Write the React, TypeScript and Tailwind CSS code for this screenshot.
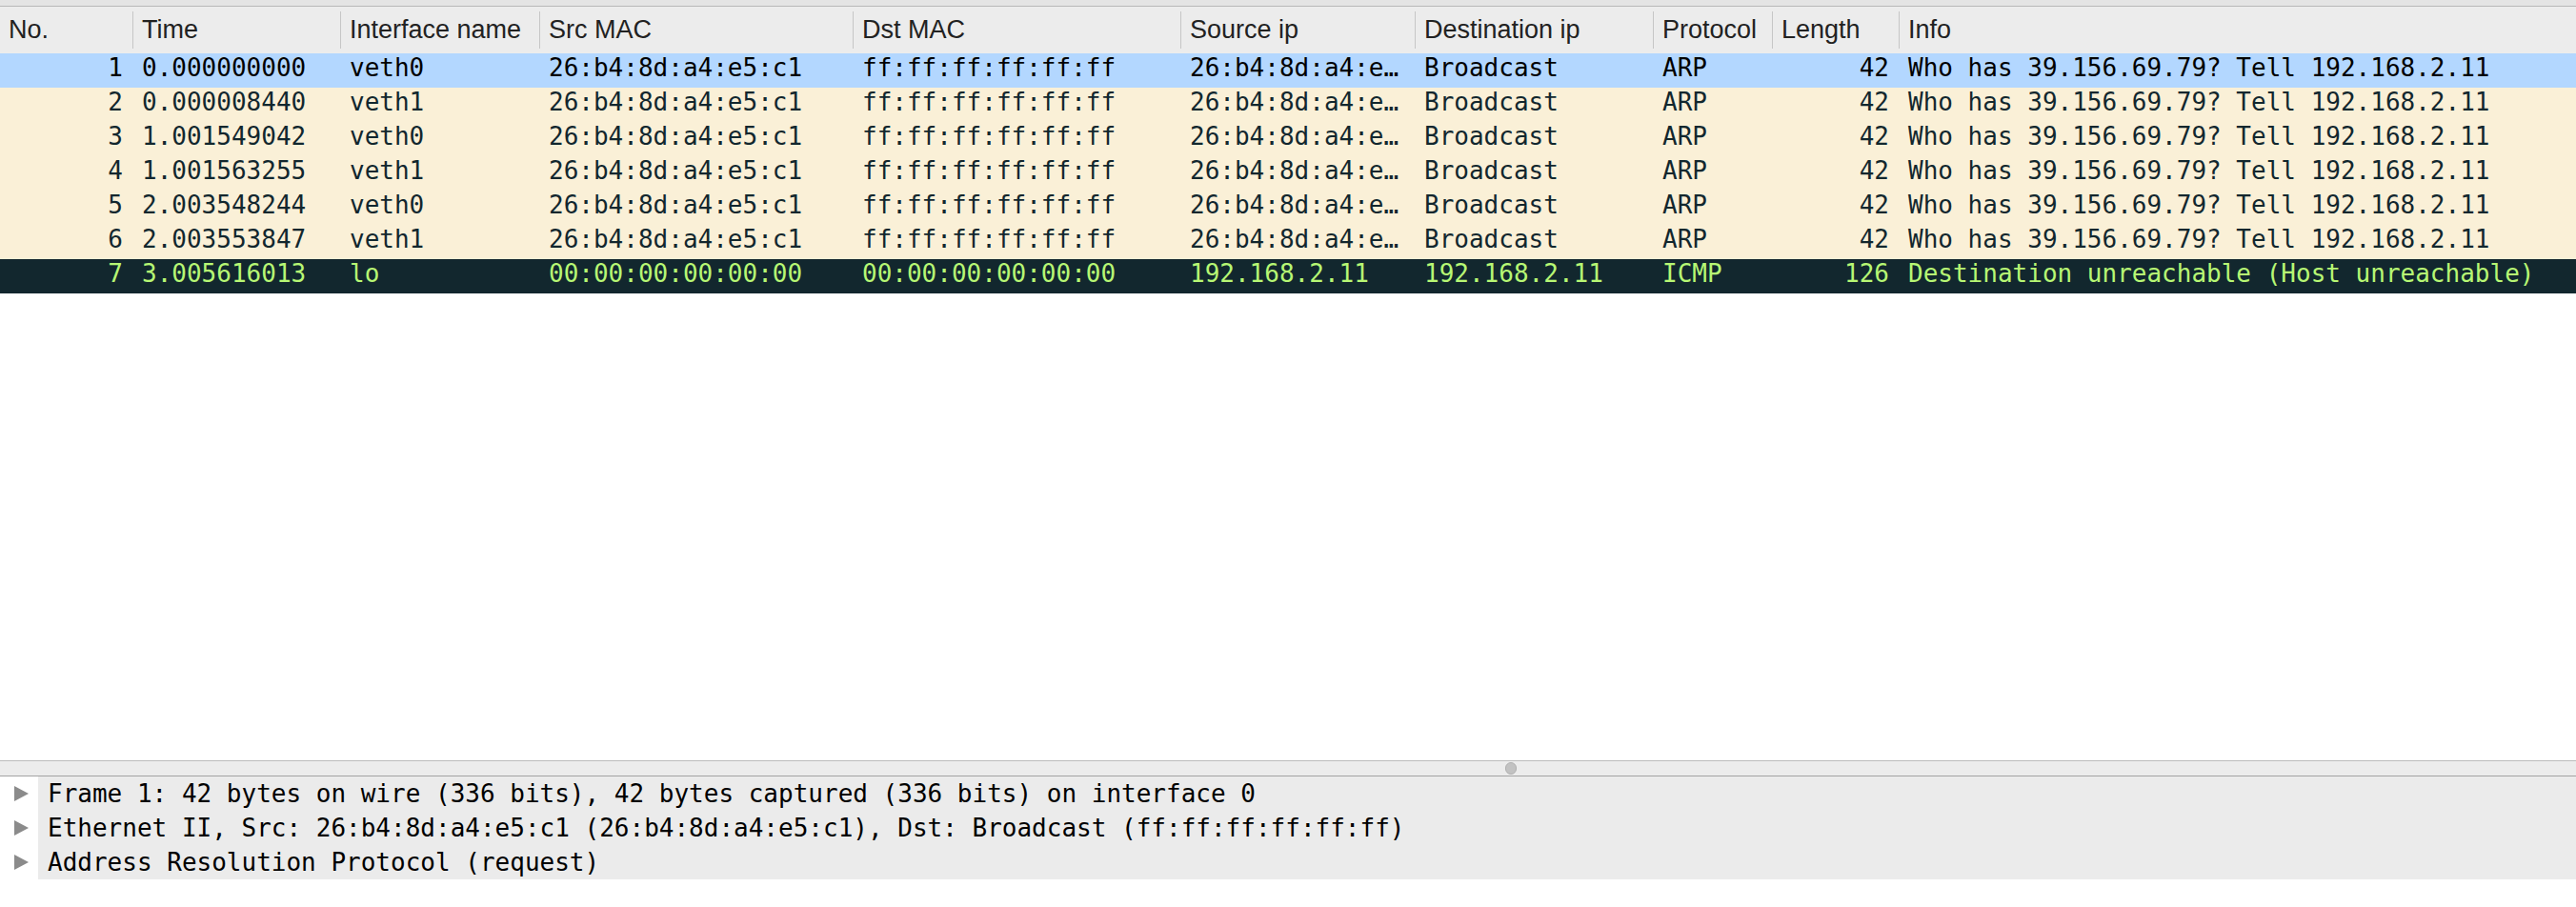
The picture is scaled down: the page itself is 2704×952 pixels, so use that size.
import React from "react";

interface Packet {
  no: number;
  time: string;
  iface: string;
  srcMac: string;
  dstMac: string;
  srcIp: string;
  dstIp: string;
  proto: string;
  length: number;
  info: string;
}

const arpInfo = "Who has 39.156.69.79? Tell 192.168.2.11";
const mac = "26:b4:8d:a4:e5:c1";
const macShort = "26:b4:8d:a4:e…";
const bcast = "ff:ff:ff:ff:ff:ff";

const packets: Packet[] = [
  { no: 1, time: "0.000000000", iface: "veth0", srcMac: mac, dstMac: bcast, srcIp: macShort, dstIp: "Broadcast", proto: "ARP", length: 42, info: arpInfo },
  { no: 2, time: "0.000008440", iface: "veth1", srcMac: mac, dstMac: bcast, srcIp: macShort, dstIp: "Broadcast", proto: "ARP", length: 42, info: arpInfo },
  { no: 3, time: "1.001549042", iface: "veth0", srcMac: mac, dstMac: bcast, srcIp: macShort, dstIp: "Broadcast", proto: "ARP", length: 42, info: arpInfo },
  { no: 4, time: "1.001563255", iface: "veth1", srcMac: mac, dstMac: bcast, srcIp: macShort, dstIp: "Broadcast", proto: "ARP", length: 42, info: arpInfo },
  { no: 5, time: "2.003548244", iface: "veth0", srcMac: mac, dstMac: bcast, srcIp: macShort, dstIp: "Broadcast", proto: "ARP", length: 42, info: arpInfo },
  { no: 6, time: "2.003553847", iface: "veth1", srcMac: mac, dstMac: bcast, srcIp: macShort, dstIp: "Broadcast", proto: "ARP", length: 42, info: arpInfo },
  {
    no: 7,
    time: "3.005616013",
    iface: "lo",
    srcMac: "00:00:00:00:00:00",
    dstMac: "00:00:00:00:00:00",
    srcIp: "192.168.2.11",
    dstIp: "192.168.2.11",
    proto: "ICMP",
    length: 126,
    info: "Destination unreachable (Host unreachable)",
  },
];

const details = [
  "Frame 1: 42 bytes on wire (336 bits), 42 bytes captured (336 bits) on interface 0",
  "Ethernet II, Src: 26:b4:8d:a4:e5:c1 (26:b4:8d:a4:e5:c1), Dst: Broadcast (ff:ff:ff:ff:ff:ff)",
  "Address Resolution Protocol (request)",
];

const mono = { fontFamily: '"DejaVu Sans Mono", "Liberation Mono", monospace' };

const Cell = ({ w, right, children }: { w: string; right?: boolean; children: React.ReactNode }) => (
  <div className={`${w} shrink-0 px-[10px] overflow-hidden whitespace-nowrap ${right ? "text-right" : ""}`}>
    {children}
  </div>
);

const HeaderCell = ({ w, first, label }: { w: string; first?: boolean; label: string }) => (
  <div className={`${w} shrink-0 flex items-stretch`}>
    {!first && <div className="w-px my-[5px] bg-[#c6c6c6]" />}
    <div className="flex items-center pl-[9px] pb-[1px]">{label}</div>
  </div>
);

const Triangle = () => (
  <svg width="15" height="16" viewBox="0 0 15 16">
    <path d="M0 0 L15 8 L0 16 Z" fill="#8b8b8b" />
  </svg>
);

export default function App() {
  return (
    <div className="w-[2704px] h-[952px] flex flex-col bg-white overflow-hidden">
      <div className="h-[7px] shrink-0 bg-[#e4e4e4] border-b border-[#b8b8b8]" />

      {/* column header */}
      <div
        className="h-[49px] shrink-0 flex bg-[#ececec] text-[27px] text-[#222222]"
        style={{ fontFamily: '"Liberation Sans", Arial, sans-serif' }}
      >
        <HeaderCell w="w-[139px]" first label="No." />
        <HeaderCell w="w-[218px]" label="Time" />
        <HeaderCell w="w-[209px]" label="Interface name" />
        <HeaderCell w="w-[329px]" label="Src MAC" />
        <HeaderCell w="w-[344px]" label="Dst MAC" />
        <HeaderCell w="w-[246px]" label="Source ip" />
        <HeaderCell w="w-[250px]" label="Destination ip" />
        <HeaderCell w="w-[125px]" label="Protocol" />
        <HeaderCell w="w-[133px]" label="Length" />
        <HeaderCell w="flex-1" label="Info" />
      </div>

      {/* packet list */}
      <div className="shrink-0 text-[26px] leading-[30px]" style={mono}>
        {packets.map((p) => {
          const selected = p.no === 1;
          const icmp = p.proto === "ICMP";
          const rowColor = selected
            ? "bg-[#b3d7ff] text-[#000000]"
            : icmp
            ? "bg-[#12272e] text-[#b7f774]"
            : "bg-[#faf0d7] text-[#12272e]";
          return (
            <div key={p.no} className={`h-[36px] flex items-start ${rowColor}`}>
              <Cell w="w-[139px]" right>{p.no}</Cell>
              <Cell w="w-[218px]">{p.time}</Cell>
              <Cell w="w-[209px]">{p.iface}</Cell>
              <Cell w="w-[329px]">{p.srcMac}</Cell>
              <Cell w="w-[344px]">{p.dstMac}</Cell>
              <Cell w="w-[246px]">{p.srcIp}</Cell>
              <Cell w="w-[250px]">{p.dstIp}</Cell>
              <Cell w="w-[125px]">{p.proto}</Cell>
              <Cell w="w-[133px]" right>{p.length}</Cell>
              <Cell w="flex-1">{p.info}</Cell>
            </div>
          );
        })}
      </div>

      <div className="flex-1" />

      {/* splitter */}
      <div className="h-[17px] shrink-0 border-t border-b border-t-[#bcbcbc] border-b-[#a3a3a3] bg-[#ececec] flex items-center pl-[1580px]">
        <div className="w-[12px] h-[13px] rounded-full bg-[#c2c2c2] border border-[#b0b0b0]" />
      </div>

      {/* packet details */}
      <div className="shrink-0 text-[26px] text-black" style={mono}>
        {details.map((d) => (
          <div key={d} className="h-[36px] flex">
            <div className="w-[40px] shrink-0 flex items-center pl-[15px] bg-white">
              <Triangle />
            </div>
            <div className="flex-1 bg-[#ebebeb] flex items-center pl-[10px] whitespace-nowrap">{d}</div>
          </div>
        ))}
      </div>

      <div className="h-[29px] shrink-0" />
    </div>
  );
}
